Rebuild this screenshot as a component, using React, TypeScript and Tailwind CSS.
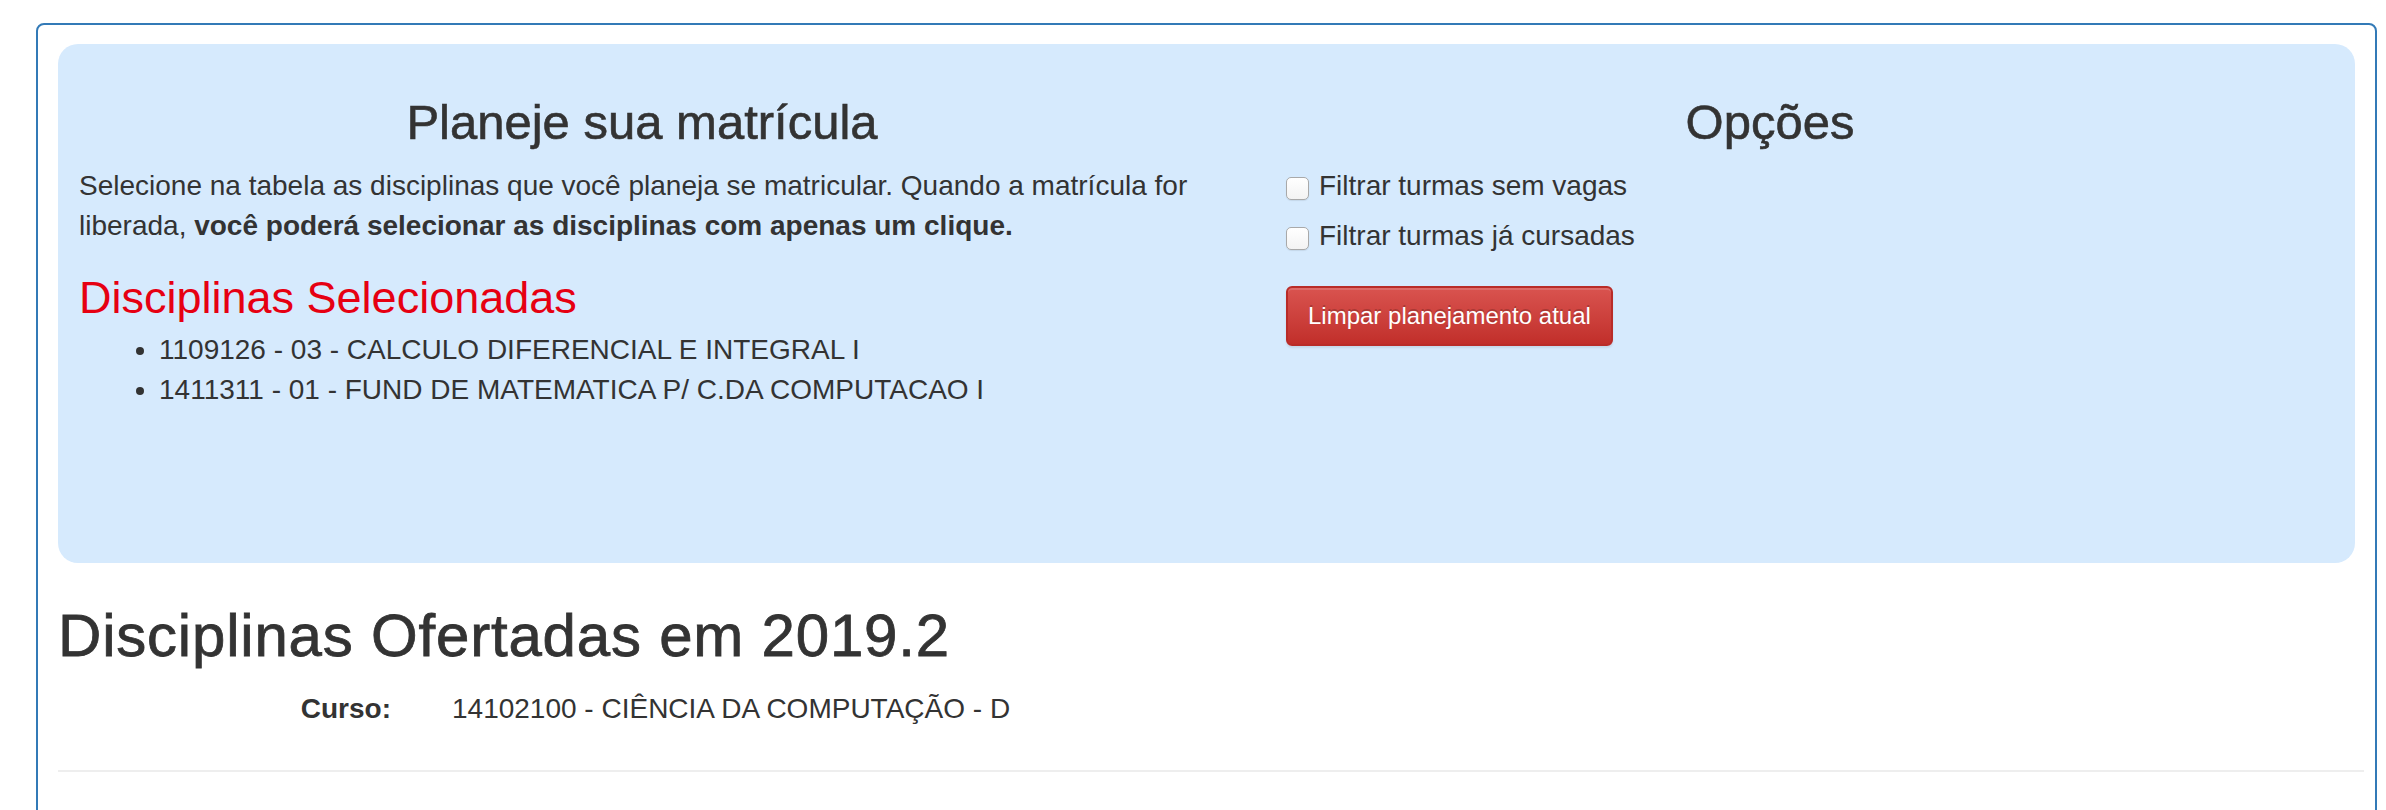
import React from "react";

const selecionadas = [
  "1109126 - 03 - CALCULO DIFERENCIAL E INTEGRAL I",
  "1411311 - 01 - FUND DE MATEMATICA P/ C.DA COMPUTACAO I",
];

const filtros = ["Filtrar turmas sem vagas", "Filtrar turmas já cursadas"];

function Filtro({ label }: { label: string }) {
  return (
    <label className="flex items-start gap-[10px] leading-[40px]">
      <input
        type="checkbox"
        className="mt-[11px] h-[23px] w-[23px] shrink-0 appearance-none rounded-[5px] border border-[#a9a9a9] bg-gradient-to-b from-white to-[#f3f3f3] shadow-[0_1px_1px_rgba(0,0,0,0.08)]"
      />
      <span>{label}</span>
    </label>
  );
}

export default function App() {
  return (
    <div className="min-h-screen bg-white pt-[23px] pl-[36px] pr-[9px] font-['Liberation_Sans',Arial,sans-serif] text-[28px] leading-[40px] text-[#333]">
      <div className="rounded-[8px] border-2 border-[#337ab7] px-[20px] pt-[19px] pb-[300px]">
        {/* painel de planejamento */}
        <div className="min-h-[519px] rounded-[20px] bg-[#d6eafd] pl-[21px] pr-[100px] pt-[51px]">
          <div className="grid grid-cols-[1126px_968px] gap-x-[81px]">
            <div>
              <h3 className="text-center text-[49px] font-medium leading-[54px] [-webkit-text-stroke:0.6px_#333]">
                Planeje sua matrícula
              </h3>
              <p className="mt-[17px]">
                Selecione na tabela as disciplinas que você planeja se
                matricular. Quando a matrícula for liberada,{" "}
                <b className="font-bold">
                  você poderá selecionar as disciplinas com apenas um clique.
                </b>
              </p>
              <h4 className="mt-[27px] text-[45px] leading-[50px] text-[#e60012]">
                Disciplinas Selecionadas
              </h4>
              <ul className="mt-[7px] list-disc pl-[80px]">
                {selecionadas.map((d) => (
                  <li key={d}>{d}</li>
                ))}
              </ul>
            </div>

            <div>
              <h3 className="text-center text-[49px] font-medium leading-[54px] [-webkit-text-stroke:0.6px_#333]">
                Opções
              </h3>
              <div className="mt-[17px] flex flex-col gap-[10px]">
                {filtros.map((f) => (
                  <Filtro key={f} label={f} />
                ))}
              </div>
              <button className="mt-[30px] rounded-[6px] border-2 border-[#b92c28] bg-gradient-to-b from-[#d9534f] to-[#c12e2a] px-[20px] py-[10px] text-[24px] leading-[36px] text-white shadow-[inset_0_2px_0_rgba(255,255,255,0.15),0_2px_2px_rgba(0,0,0,0.08)] [text-shadow:0_-2px_0_rgba(0,0,0,0.2)]">
                Limpar planejamento atual
              </button>
            </div>
          </div>
        </div>

        <h2 className="mt-[40px] text-[60px] font-medium leading-[66px] tracking-[0.8px] [-webkit-text-stroke:0.8px_#333]">
          Disciplinas Ofertadas em 2019.2
        </h2>

        <dl className="mt-[20px] flex">
          <dt className="w-[333px] text-right font-bold">Curso:</dt>
          <dd className="ml-[61px]">14102100 - CIÊNCIA DA COMPUTAÇÃO - D</dd>
        </dl>

        <hr className="mt-[41px] mr-[-9px] border-t-2 border-[#eee]" />
      </div>
    </div>
  );
}
